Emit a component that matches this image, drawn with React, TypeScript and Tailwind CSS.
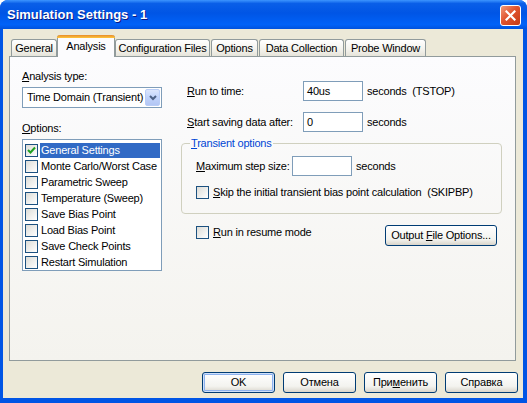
import React from 'react';

const font = "font-['Tahoma','Liberation_Sans',Arial,sans-serif]";

const options = [
    'General Settings',
    'Monte Carlo/Worst Case',
    'Parametric Sweep',
    'Temperature (Sweep)',
    'Save Bias Point',
    'Load Bias Point',
    'Save Check Points',
    'Restart Simulation',
];

const tabs = [
    { label: 'General', w: 'w-[46px]' },
    { label: 'Analysis', w: 'w-[58px]', active: true },
    { label: 'Configuration Files', w: 'w-[95px]' },
    { label: 'Options', w: 'w-[47px]' },
    { label: 'Data Collection', w: 'w-[85px]' },
    { label: 'Probe Window', w: 'w-[81px]' },
];

function CheckBox({ checked = false }: { checked?: boolean }) {
    return (
        <div className="w-[13px] h-[13px] shrink-0 border border-[#1C5180] bg-[linear-gradient(135deg,#DCDCD7,#FFFFFF)] flex items-center justify-center">
            {checked && (
                <svg width="9" height="9" viewBox="0 0 9 9">
                    <path d="M1 4 L3.5 6.5 L8 1.5" fill="none" stroke="#21A121" strokeWidth="2" />
                </svg>
            )}
        </div>
    );
}

function Btn({ children, w, def = false, h = 'h-[21px]' }: { children: React.ReactNode; w: string; def?: boolean; h?: string }) {
    return (
        <div className={cn(
            w, h,
            "shrink-0 rounded-[3px] border border-[#003C74] bg-[linear-gradient(to_bottom,#FFFFFF,#F3F3EF_70%,#D9D5CB)] flex items-center justify-center text-black",
            def && "shadow-[inset_0_0_0_1px_#CEE0FA,inset_0_0_0_2px_#8DB2EE]"
        )}>
            <span className="whitespace-nowrap">{children}</span>
        </div>
    );
}

function Edit({ w, value = '' }: { w: string; value?: string }) {
    return (
        <div className={cn(w, "h-[20px] shrink-0 border border-[#7F9DB9] bg-white pl-[3px] flex items-center")}>{value}</div>
    );
}

export default function App() {
    return (
        <div className={cn(font, "w-[527px] h-[403px] flex flex-col text-[11px] tracking-[-0.2px] text-black bg-white")}>
            <div className="flex-1 flex flex-col rounded-t-[8px] bg-[#0055E5] overflow-hidden">
                {/* Title bar */}
                <div className="h-[29px] shrink-0 flex items-center pl-[7px] pr-[6px] bg-[linear-gradient(to_bottom,#3D95FF,#0A5FE8_12%,#0055E5_45%,#0062F8_85%,#0052DD)]">
                    <span className="font-['Trebuchet_MS','Liberation_Sans',Arial,sans-serif] font-bold text-[13px] tracking-normal text-white [text-shadow:1px_1px_0_#0A1883] pt-[1px]">
                        Simulation Settings - 1
                    </span>
                    <div className="ml-auto w-[21px] h-[21px] mt-[1px] rounded-[3px] border border-white bg-[linear-gradient(135deg,#F29A7A,#E0542F_45%,#C63A14)] flex items-center justify-center">
                        <svg width="11" height="11" viewBox="0 0 11 11">
                            <path d="M1.5 1.5 L9.5 9.5 M9.5 1.5 L1.5 9.5" stroke="white" strokeWidth="2.2" strokeLinecap="square" />
                        </svg>
                    </div>
                </div>

                {/* Client area */}
                <div className="flex-1 ml-[3px] mr-[4px] mb-[5px] bg-[#ECE9D8] flex flex-col">
                    {/* Tabs */}
                    <div className="flex items-end h-[27px] pl-[8px] shrink-0">
                        {tabs.map((t, i) => (
                            <div
                                key={t.label}
                                className={cn(
                                    t.w,
                                    "whitespace-nowrap",
                                    i > 2 && "ml-[1px]",
                                    t.active
                                        ? "h-[22px] -mb-[1px] relative z-10 bg-[#FCFCFE] border-x border-[#919B9C] rounded-t-[3px] flex flex-col"
                                        : "h-[17px] border-x border-t border-[#919B9C] rounded-t-[3px] bg-[linear-gradient(to_bottom,#FFFFFF,#F3F2EC_60%,#E6E4DA)] flex items-center justify-center"
                                )}
                            >
                                {t.active ? (
                                    <>
                                        <div className="h-[3px] -mx-[1px] rounded-t-[3px] bg-[linear-gradient(to_bottom,#E68B2C,#FFC73C)]" />
                                        <div className="flex-1 flex items-center justify-center pb-[3px]">{t.label}</div>
                                    </>
                                ) : (
                                    t.label
                                )}
                            </div>
                        ))}
                    </div>

                    {/* Tab panel */}
                    <div className="ml-[6px] w-[507px] h-[305px] shrink-0 border border-[#919B9C] bg-[linear-gradient(to_bottom,#FCFCFE,#F4F3EE)] flex">
                        {/* Left column */}
                        <div className="ml-[12px] w-[140px] flex flex-col">
                            <div className="mt-[13px] h-[13px] leading-[13px]"><u>A</u>nalysis type:</div>
                            <div className="mt-[4px] h-[21px] border border-[#7F9DB9] bg-white flex items-center pl-[4px] pr-[1px]">
                                <span className="flex-1 whitespace-nowrap overflow-hidden">Time Domain (Transient)</span>
                                <div className="w-[15px] h-[17px] shrink-0 rounded-[2px] border border-[#B9CDF7] bg-[linear-gradient(to_bottom,#DCE6FC,#C1D3FB_50%,#B2C6F4)] flex items-center justify-center">
                                    <svg width="8" height="6" viewBox="0 0 8 6">
                                        <path d="M1 1 L4 4 L7 1" fill="none" stroke="#4D6185" strokeWidth="2" />
                                    </svg>
                                </div>
                            </div>
                            <div className="mt-[14px] h-[13px] leading-[13px]"><u>O</u>ptions:</div>
                            <div className="mt-[4px] h-[132px] border border-[#7F9DB9] bg-white pt-[2px] pl-[2px] pr-[1px]">
                                {options.map((o, i) => (
                                    <div key={o} className="h-[16px] flex items-center">
                                        <CheckBox checked={i === 0} />
                                        <span className={cn(
                                            "ml-[2px] pl-[1px] h-[15px] leading-[15px] whitespace-nowrap",
                                            i === 0 && "flex-1 bg-[#316AC5] text-white"
                                        )}>{o}</span>
                                    </div>
                                ))}
                            </div>
                        </div>

                        {/* Right column */}
                        <div className="ml-[19px] w-[321px] flex flex-col">
                            <div className="mt-[24px] h-[20px] flex items-center pl-[6px]">
                                <span className="w-[116px] whitespace-nowrap"><u>R</u>un to time:</span>
                                <Edit w="w-[60px]" value="40us" />
                                <span className="ml-[4px] whitespace-nowrap">seconds&nbsp; (TSTOP)</span>
                            </div>
                            <div className="mt-[11px] h-[20px] flex items-center pl-[6px]">
                                <span className="w-[116px] whitespace-nowrap"><u>S</u>tart saving data after:</span>
                                <Edit w="w-[60px]" value="0" />
                                <span className="ml-[4px]">seconds</span>
                            </div>

                            {/* Group box */}
                            <div className="mt-[11px] h-[71px] relative border border-[#D0D0BF] rounded-[4px] flex flex-col">
                                <span className="absolute -top-[7px] left-[8px] px-[1px] bg-[#FAFAFA] text-[#0046D5] leading-[13px] whitespace-nowrap">
                                    <u>T</u>ransient options
                                </span>
                                <div className="mt-[12px] h-[20px] flex items-center pl-[14px]">
                                    <span className="w-[96px] whitespace-nowrap"><u>M</u>aximum step size:</span>
                                    <Edit w="w-[60px]" />
                                    <span className="ml-[4px]">seconds</span>
                                </div>
                                <div className="mt-[10px] h-[13px] flex items-center pl-[14px]">
                                    <CheckBox />
                                    <span className="ml-[4px] whitespace-nowrap"><u>S</u>kip the initial transient bias point calculation&nbsp; (SKIPBP)</span>
                                </div>
                            </div>

                            <div className="mt-[11px] flex items-start pl-[15px] pr-[5px]">
                                <div className="mt-[1px] flex items-center h-[13px]">
                                    <CheckBox />
                                    <span className="ml-[4px] whitespace-nowrap"><u>R</u>un in resume mode</span>
                                </div>
                                <div className="ml-auto">
                                    <Btn w="w-[112px]">Output <u>F</u>ile Options...</Btn>
                                </div>
                            </div>
                        </div>
                    </div>

                    {/* Dialog buttons */}
                    <div className="mt-[11px] flex justify-end gap-[8px] pr-[5px]">
                        <Btn w="w-[73px]" def>OK</Btn>
                        <Btn w="w-[73px]">Отмена</Btn>
                        <Btn w="w-[73px]">При<u>м</u>енить</Btn>
                        <Btn w="w-[73px]">Справка</Btn>
                    </div>
                </div>
            </div>
        </div>
    );
}

const cn = (...inputs: any[]) => inputs.filter(Boolean).join(' ');
